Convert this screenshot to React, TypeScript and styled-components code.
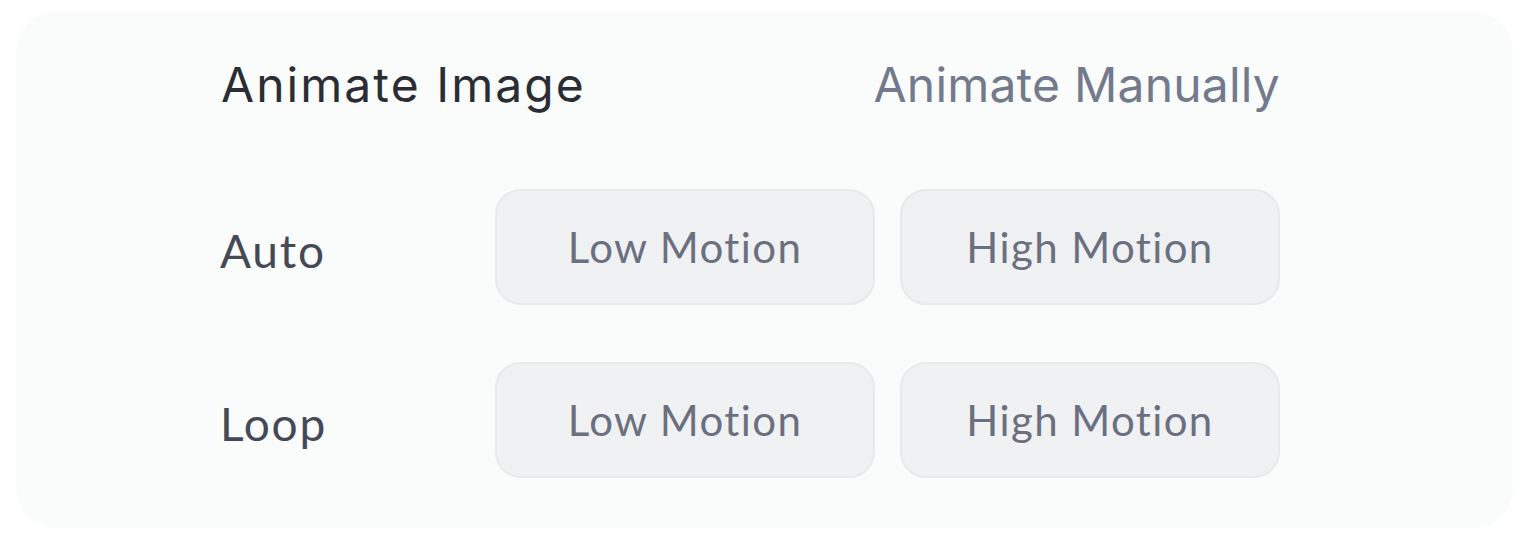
import React from "react";
import styled, { createGlobalStyle } from "styled-components";

const Global = createGlobalStyle`
  html, body { margin: 0; padding: 0; background: #ffffff; }
  body { width: 1530px; height: 540px; overflow: hidden; }
`;

const Page = styled.div`
  padding: 12px 17px 12px 16px;
  box-sizing: border-box;
  width: 1530px;
  height: 540px;
`;

const Card = styled.div`
  height: 516px;
  box-sizing: border-box;
  background: #fafbfb;
  border-radius: 40px;
  padding: 0 233px 0 205px;
  display: flex;
  flex-direction: column;
`;

const Header = styled.div`
  height: 142px;
  display: flex;
  align-items: center;
  justify-content: space-between;
`;

const Title = styled.div<{ $muted?: boolean }>`
  font-family: Inter, "DejaVu Sans", sans-serif;
  font-size: 48px;
  font-weight: 400;
  letter-spacing: ${(p) => (p.$muted ? "0.2px" : "2.05px")};
  color: ${(p) => (p.$muted ? "#737a8c" : "#2b2d35")};
  margin-top: 2px;
`;

const Grid = styled.div`
  margin-top: 35px;
  display: grid;
  grid-template-columns: 249px 380px 380px;
  grid-auto-rows: 116px;
  column-gap: 25px;
  row-gap: 57px;
  align-items: center;
`;

const Label = styled.div`
  font-family: Lato, "Open Sans", sans-serif;
  font-size: 46px;
  letter-spacing: 1.8px;
  color: #454956;
  padding-top: 6px;
  margin-left: -1px;
`;

const Option = styled.button`
  height: 116px;
  box-sizing: border-box;
  border: 2px solid #e8e9eb;
  background: #f0f1f3;
  border-radius: 26px;
  font-family: Lato, "Open Sans", sans-serif;
  font-size: 42px;
  letter-spacing: 1.4px;
  color: #6b7080;
  display: flex;
  align-items: center;
  justify-content: center;
  padding: 0;
  cursor: pointer;
`;

const rows = ["Auto", "Loop"];

export default function App() {
  return (
    <>
      <Global />
      <Page>
        <Card>
          <Header>
            <Title>Animate Image</Title>
            <Title $muted>Animate Manually</Title>
          </Header>
          <Grid>
            {rows.map((r) => (
              <React.Fragment key={r}>
                <Label>{r}</Label>
                <Option>Low Motion</Option>
                <Option>High Motion</Option>
              </React.Fragment>
            ))}
          </Grid>
        </Card>
      </Page>
    </>
  );
}
